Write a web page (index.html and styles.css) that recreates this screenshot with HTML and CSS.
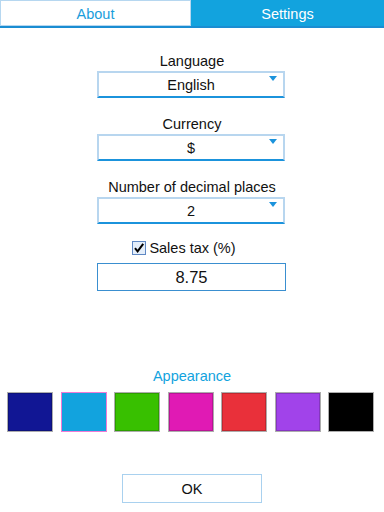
FILE: index.html
```html
<!DOCTYPE html>
<html>
<head>
<meta charset="utf-8">
<link rel="stylesheet" href="styles.css">
</head>
<body>
<div class="tabbar">
  <div class="tab tab-about">About</div>
  <div class="tab tab-settings">Settings</div>
</div>
<div class="content">
  <div class="field">
    <div class="label">Language</div>
    <div class="select">English<span class="arrow"></span></div>
  </div>
  <div class="field">
    <div class="label">Currency</div>
    <div class="select">$<span class="arrow"></span></div>
  </div>
  <div class="field">
    <div class="label">Number of decimal places</div>
    <div class="select">2<span class="arrow"></span></div>
  </div>
  <div class="check-row">
    <span class="checkbox"><svg width="12" height="12" viewBox="0 0 12 12"><path d="M2 6.2 L4.6 9.4 L10.2 1.8" fill="none" stroke="#000" stroke-width="2"/></svg></span>
    <span class="check-label">Sales tax (%)</span>
  </div>
  <div class="input">8.75</div>
  <div class="appearance">Appearance</div>
  <div class="swatches">
    <div class="swatch navy"></div>
    <div class="swatch sky selected"></div>
    <div class="swatch green"></div>
    <div class="swatch magenta"></div>
    <div class="swatch red"></div>
    <div class="swatch purple"></div>
    <div class="swatch black"></div>
  </div>
  <div class="ok">OK</div>
</div>
</body>
</html>
```
FILE: styles.css
```css
* { box-sizing: border-box; }
html, body { margin: 0; padding: 0; background: #fff; }
body {
  width: 384px;
  height: 512px;
  font-family: "Liberation Sans", Arial, sans-serif;
  color: #111;
  overflow: hidden;
}
.tabbar {
  display: flex;
  height: 28px;
  border-bottom: 2px solid #1a8dd2;
}
.tab {
  flex: 1;
  display: flex;
  align-items: center;
  justify-content: center;
  font-size: 14.5px;
  padding-top: 1px;
}
.tab-about {
  flex: 0 0 191px;
  border: 1px solid #b6d7f0;
  color: #1a9ddb;
  background: #fff;
}
.tab-settings {
  background: #12a3de;
  color: #fff;
}
.content {
  display: flex;
  flex-direction: column;
  align-items: center;
  padding-top: 24px;
}
.field {
  display: flex;
  flex-direction: column;
  align-items: center;
  margin-bottom: 17px;
}
.label {
  font-size: 14.5px;
  line-height: 18px;
  margin-bottom: 1px;
}
.select {
  position: relative;
  width: 188px;
  height: 27px;
  margin-right: 2px;
  border: 2px solid #b8d6ef;
  border-bottom: 2px solid #1b93dc;
  display: flex;
  align-items: center;
  justify-content: center;
  font-size: 14.5px;
}
.arrow {
  position: absolute;
  right: 6px;
  top: 3px;
  width: 0;
  height: 0;
  border-left: 4px solid transparent;
  border-right: 4px solid transparent;
  border-top: 5px solid #1b93dc;
}
.check-row {
  display: flex;
  align-items: center;
  height: 18px;
  margin-top: -2px;
  margin-right: 16px;
}
.checkbox {
  width: 14px;
  height: 14px;
  border: 1px solid #5f88c4;
  background: #e4eefa;
  display: flex;
  align-items: center;
  justify-content: center;
  margin-right: 3px;
}
.check-label {
  font-size: 14.5px;
}
.input {
  margin-top: 6px;
  width: 189px;
  height: 28px;
  margin-right: 1px;
  border: 1px solid #3a8fd0;
  display: flex;
  align-items: center;
  justify-content: center;
  font-size: 16.5px;
}
.appearance {
  margin-top: 76px;
  font-size: 14.5px;
  line-height: 18px;
  color: #12a3de;
}
.swatches {
  align-self: stretch;
  display: flex;
  gap: 7.5px;
  padding: 0 10px 0 7px;
  margin-top: 7px;
}
.swatch {
  width: 46px;
  height: 40px;
  border: 1px solid #adadad;
  box-shadow: inset 0 0 0 1px rgba(0,0,0,0.18);
}
.swatch.selected { border-color: #f07ad6; box-shadow: none; }
.navy { background: #111694; }
.sky { background: #12a3de; }
.green { background: #38c000; }
.magenta { background: #e01ab4; }
.red { background: #e9303a; }
.purple { background: #a143ea; }
.black { background: #000; }
.ok {
  margin-top: 42px;
  width: 140px;
  height: 29px;
  border: 1px solid #a9d1ef;
  display: flex;
  align-items: center;
  justify-content: center;
  font-size: 14.5px;
}
```
